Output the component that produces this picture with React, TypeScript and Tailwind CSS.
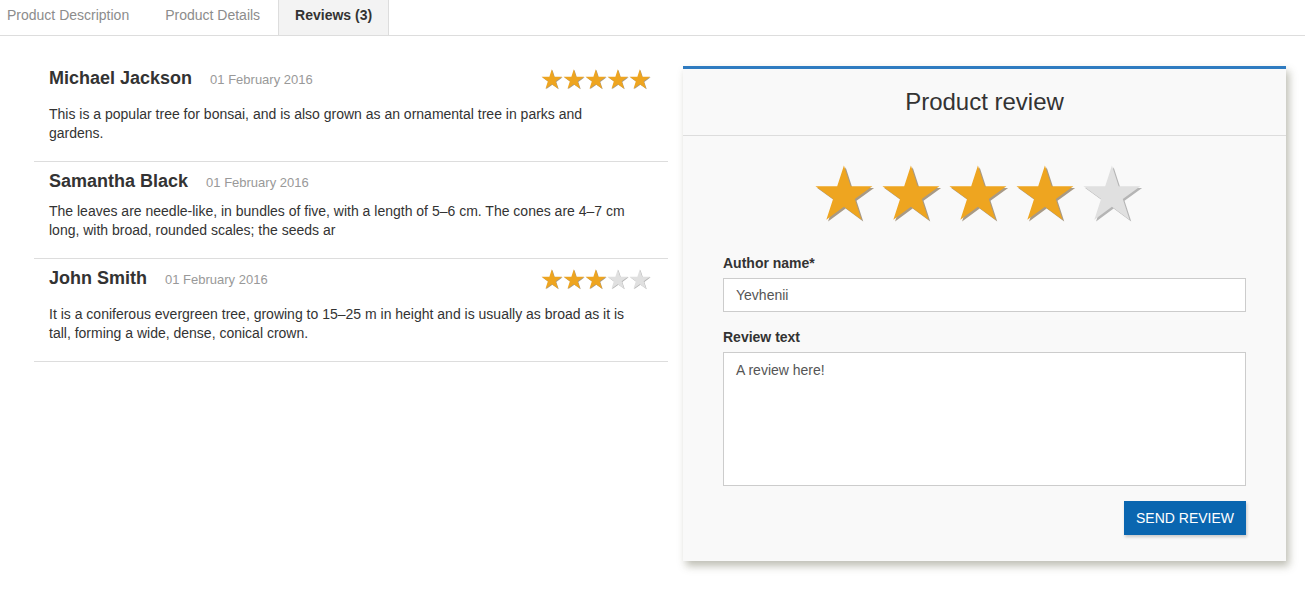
const starPoints = (() => {
  const cx = 52;
  const cy = 52.5;
  const R = 52;
  const r = R * 0.382;
  const pts: string[] = [];
  for (let i = 0; i < 10; i++) {
    const rad = i % 2 === 0 ? R : r;
    const a = (Math.PI / 5) * i - Math.PI / 2;
    pts.push(`${(cx + rad * Math.cos(a)).toFixed(2)},${(cy + rad * Math.sin(a)).toFixed(2)}`);
  }
  return pts.join(" ");
})();

const Star = ({ filled, className }: { filled: boolean; className: string }) => (
  <svg viewBox="0 0 106 100" className={className}>
    <polygon points={starPoints} fill={filled ? "#a89a86" : "#b5b5b5"} transform="translate(3 3)" />
    <polygon points={starPoints} fill={filled ? "#eea520" : "#e0e0e0"} />
  </svg>
);

const reviews = [
  {
    name: "Michael Jackson",
    date: "01 February 2016",
    rating: 5,
    text: "This is a popular tree for bonsai, and is also grown as an ornamental tree in parks and gardens.",
  },
  {
    name: "Samantha Black",
    date: "01 February 2016",
    rating: 0,
    text: "The leaves are needle-like, in bundles of five, with a length of 5–6 cm. The cones are 4–7 cm long, with broad, rounded scales; the seeds ar",
  },
  {
    name: "John Smith",
    date: "01 February 2016",
    rating: 3,
    text: "It is a coniferous evergreen tree, growing to 15–25 m in height and is usually as broad as it is tall, forming a wide, dense, conical crown.",
  },
];

export default function App() {
  return (
    <div className="min-h-screen bg-white text-[#333] font-['Liberation_Sans',Arial,sans-serif]">
      {/* tabs */}
      <div className="flex h-[36px] border-b border-[#ddd] text-[14px]">
        <div className="ml-[-11px] px-[18px] leading-[31px] text-[#8c8c8c]">Product Description</div>
        <div className="px-[18px] leading-[31px] text-[#8c8c8c]">Product Details</div>
        <div className="px-[16px] leading-[31px] font-bold text-[#333] bg-[#f3f3f3] border-x border-[#ddd]">Reviews (3)</div>
      </div>

      <div className="flex items-start pl-[34px] pt-[29px]">
        {/* review list */}
        <div className="w-[634px]">
          {reviews.map((r, i) => (
            <div key={i} className="border-b border-[#ddd] px-[15px] pt-[6px] pb-[18px] first:pt-0">
              <div className="flex items-start justify-between mb-[8px]">
                <div className="flex items-baseline h-[26px] leading-[26px]">
                  <span className="text-[18px] font-bold text-[#333]">{r.name}</span>
                  <span className="ml-[18px] text-[13px] text-[#999]">{r.date}</span>
                </div>
                {r.rating > 0 && (
                  <div className="flex h-[32px] pt-[4px] mr-[2px]">
                    {[0, 1, 2, 3, 4].map((s) => (
                      <Star key={s} filled={s < r.rating} className="w-[22px] h-[21px]" />
                    ))}
                  </div>
                )}
              </div>
              <p className="max-w-[585px] text-[14px] leading-[19px] text-[#333]">{r.text}</p>
            </div>
          ))}
        </div>

        {/* review form */}
        <div className="ml-[15px] mt-[1px] w-[603px] bg-[#f9f9f9] border-t-[3px] border-[#2f7bc0] shadow-[3px_5px_8px_rgba(70,70,40,0.35)]">
          <div className="h-[67px] border-b border-[#ddd] flex items-center justify-center">
            <h2 className="text-[24px] text-[#333]">Product review</h2>
          </div>
          <div className="px-[40px] pt-[29px] pb-[26px]">
            <div className="flex justify-center gap-[6px] pr-[12px]">
              {[0, 1, 2, 3, 4].map((s) => (
                <Star key={s} filled={s < 4} className="w-[61px] h-[58px]" />
              ))}
            </div>
            <label className="block mt-[30px] mb-[5px] text-[14px] leading-[20px] font-bold text-[#333]">Author name*</label>
            <input
              defaultValue="Yevhenii"
              className="block w-full h-[34px] px-[12px] bg-white border border-[#ccc] text-[14px] text-[#555] outline-none"
            />
            <label className="block mt-[15px] mb-[5px] text-[14px] leading-[20px] font-bold text-[#333]">Review text</label>
            <textarea
              defaultValue="A review here!"
              className="block w-full h-[134px] px-[12px] py-[7px] bg-white border border-[#ccc] text-[14px] text-[#555] outline-none resize-none"
            />
            <div className="flex justify-end mt-[15px]">
              <button className="w-[122px] h-[34px] bg-[#0a66b0] text-white text-[14px] shadow-[1px_2px_3px_rgba(0,0,0,0.2)]">
                SEND REVIEW
              </button>
            </div>
          </div>
        </div>
      </div>
    </div>
  );
}
